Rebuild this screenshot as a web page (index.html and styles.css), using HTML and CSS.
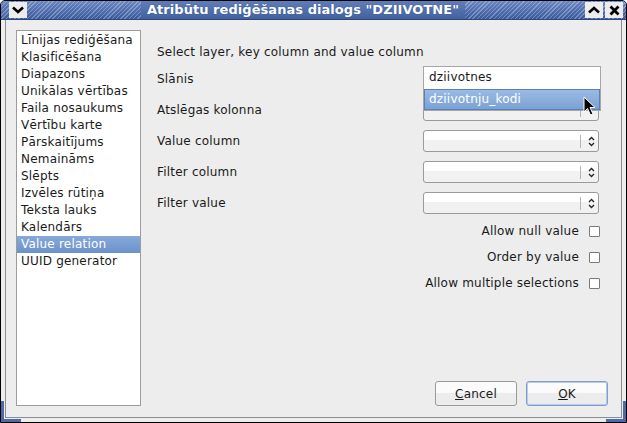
FILE: index.html
```html
<!DOCTYPE html>
<html lang="lv">
<head>
  <meta charset="UTF-8" />
  <title>Atribūtu rediģēšanas dialogs</title>
  <link rel="stylesheet" href="styles.css">
</head>
<body>
  <div class="window">
    <!-- Title bar -->
    <div class="titlebar">
      <span class="tb-btn menu">
        <svg width="12" height="8" viewBox="0 0 12 8"><path d="M1 1.5 L6 6 L11 1.5" fill="none" stroke="#000" stroke-width="2.6"/></svg>
      </span>
      <div class="title"><span>Atribūtu rediģēšanas dialogs "DZIIVOTNE"</span></div>
      <span class="tb-btn">
        <svg width="12" height="8" viewBox="0 0 12 8"><path d="M1 6.5 L6 2 L11 6.5" fill="none" stroke="#000" stroke-width="2.6"/></svg>
      </span>
      <span class="tb-btn">
        <svg width="11" height="11" viewBox="0 0 11 11"><path d="M1.5 1.5 L9.5 9.5 M9.5 1.5 L1.5 9.5" fill="none" stroke="#000" stroke-width="2.8"/></svg>
      </span>
    </div>

    <div class="frame">
      <div class="client">
        <!-- Widget types -->
        <ul class="types">
          <li>Līnijas rediģēšana</li>
          <li>Klasificēšana</li>
          <li>Diapazons</li>
          <li>Unikālas vērtības</li>
          <li>Faila nosaukums</li>
          <li>Vērtību karte</li>
          <li>Pārskaitījums</li>
          <li>Nemaināms</li>
          <li>Slēpts</li>
          <li>Izvēles rūtiņa</li>
          <li>Teksta lauks</li>
          <li>Kalendārs</li>
          <li class="selected">Value relation</li>
          <li>UUID generator</li>
        </ul>

        <div class="panel">
          <p class="intro">Select layer, key column and value column</p>

          <div class="form">
            <label>Slānis</label>
            <div class="field">
              <div class="combo"><span class="sep"></span><span class="arrows"></span></div>
              <div class="popup">
                <div class="opt">dziivotnes</div>
                <div class="opt hover">dziivotnju_kodi</div>
              </div>
              <svg class="cursor" width="13" height="21" viewBox="0 0 13 21">
                <path d="M1 1 L1 16 L4.5 12.5 L7.5 19 L10 18 L7 11.5 L12 11.5 Z" fill="#000" stroke="#fff" stroke-width="1"/>
              </svg>
            </div>

            <label>Atslēgas kolonna</label>
            <div class="field"><div class="combo"><span class="sep"></span></div></div>

            <label>Value column</label>
            <div class="field"><div class="combo"><span class="sep"></span><span class="arrows"></span></div></div>

            <label>Filter column</label>
            <div class="field"><div class="combo"><span class="sep"></span><span class="arrows"></span></div></div>

            <label>Filter value</label>
            <div class="field"><div class="combo"><span class="sep"></span><span class="arrows"></span></div></div>
          </div>

          <div class="checks">
            <div class="check">Allow null value <span class="box"></span></div>
            <div class="check">Order by value <span class="box"></span></div>
            <div class="check">Allow multiple selections <span class="box"></span></div>
          </div>

          <div class="buttons">
            <button class="btn"><u>C</u>ancel</button>
            <button class="btn default"><u>O</u>K</button>
          </div>
        </div>
      </div>
      <span class="grip left"></span>
      <span class="grip right"></span>
    </div>
  </div>
</body>
</html>
```

FILE: styles.css
```css
body {
  margin: 0;
  font-family: "DejaVu Sans", sans-serif;
  font-size: 12px;
  letter-spacing: 0.2px;
  color: #1a1a1a;
  background: #fff;
}

.window {
  width: 627px;
  height: 423px;
  box-sizing: border-box;
  border: 1px solid #000;
  border-radius: 5px 5px 0 0;
  background: #ededed;
  display: flex;
  flex-direction: column;
  overflow: hidden;
}

/* title bar */
.titlebar {
  height: 19px;
  flex: none;
  display: flex;
  align-items: center;
  padding: 0 3px 0 8px;
  gap: 2px;
  background:
    repeating-linear-gradient(-45deg, rgba(255,255,255,0.28) 0 1px, transparent 1px 3px),
    linear-gradient(#6886c3, #3a5a9c);
  border-bottom: 1px solid #2c467c;
  box-sizing: border-box;
}

.tb-btn {
  width: 18px;
  height: 16px;
  background: #ececec;
  display: flex;
  align-items: center;
  justify-content: center;
  flex: none;
}

.title {
  flex: 1;
  text-align: center;
  padding-right: 6px;
}

.title span {
  display: inline-block;
  padding: 0 6px;
  line-height: 18px;
  font-weight: bold;
  font-size: 13px;
  letter-spacing: 0.05px;
  color: #fff;
  background: linear-gradient(#5f7dba, #42629d);
  text-shadow: 0 0 1px #2c467c;
}

.frame {
  flex: 1;
  padding: 0 4px 4px 4px;
  display: flex;
  position: relative;
}

.client {
  flex: 1;
  display: flex;
  padding: 10px 13px 11px 10px;
  border: 1px solid #8e8e8e;
  border-top: none;
  background: #ededed;
}

/* list of widget types */
.types {
  list-style: none;
  margin: 0;
  padding: 1px 0 0;
  width: 123px;
  background: #fff;
  border: 1px solid #9c9c9c;
  flex: none;
}

.types li {
  height: 17px;
  line-height: 17px;
  padding-left: 4px;
  white-space: nowrap;
}

.types li.selected {
  background: linear-gradient(#86a9da, #6c92ca);
  color: #fff;
}

.panel {
  flex: 1;
  margin-left: 16px;
  display: flex;
  flex-direction: column;
}

.intro {
  margin: 14px 0 0;
  line-height: 17px;
}

.form {
  margin-top: 7px;
  margin-right: 9px;
  display: grid;
  grid-template-columns: 1fr 176px;
  grid-auto-rows: 22px;
  row-gap: 9px;
  align-items: center;
}

.field {
  position: relative;
  height: 22px;
}

.combo {
  height: 22px;
  box-sizing: border-box;
  border: 1px solid #9a9a9a;
  border-radius: 3px;
  background: linear-gradient(#fff 0 45%, #f1f1f1 45%);
  position: relative;
}

.combo .sep {
  position: absolute;
  left: 156px;
  top: 4px;
  height: 13px;
  border-left: 1px solid #b4b4b4;
}

.combo .arrows {
  position: absolute;
  left: 164px;
  top: 5px;
  width: 7px;
  height: 11px;
  background:
    url("data:image/svg+xml;utf8,<svg xmlns='http://www.w3.org/2000/svg' width='7' height='11'><path d='M1 4 L3.5 1.5 L6 4 M1 7 L3.5 9.5 L6 7' fill='none' stroke='%23222' stroke-width='1.3'/></svg>") no-repeat;
}

/* open dropdown of the layer combo */
.popup {
  position: absolute;
  left: 0;
  top: -2px;
  width: 178px;
  box-sizing: border-box;
  border: 1px solid #a6a6a6;
  background: #fff;
  z-index: 2;
}

.opt {
  height: 22px;
  line-height: 21px;
  padding-left: 5px;
}

.opt.hover {
  height: 21px;
  box-sizing: border-box;
  background: linear-gradient(#9bbbe4, #7ba1d4);
  border: 1px solid #5b80b9;
  padding-left: 4px;
  line-height: 19px;
  color: #fff;
}

.cursor {
  position: absolute;
  left: 160px;
  top: 28px;
  z-index: 3;
}

.checks {
  margin-top: 4px;
  margin-right: 8px;
  display: flex;
  flex-direction: column;
  align-items: flex-end;
}

.check {
  height: 26px;
  display: flex;
  align-items: center;
  gap: 10px;
}

.box {
  width: 11px;
  height: 11px;
  box-sizing: border-box;
  border: 1px solid #7a7a7a;
  border-radius: 1px;
  background: #fff;
}

.buttons {
  margin-top: auto;
  display: flex;
  justify-content: flex-end;
  gap: 9px;
}

.btn {
  width: 82px;
  height: 25px;
  font-family: inherit;
  font-size: 12px;
  letter-spacing: 0.2px;
  color: #1a1a1a;
  border: 1px solid #9a9a9a;
  border-radius: 3px;
  background: linear-gradient(#fbfbfb 0 50%, #ececec 50%);
  padding: 0;
}

.btn.default {
  border-color: #7f9dd0;
  box-shadow: inset 0 0 0 1px #b8cae8;
}

/* resize grips in the bottom corners */
.grip {
  position: absolute;
  bottom: -1px;
  width: 17px;
  height: 18px;
  border-bottom: 4px solid #4d6aa8;
}

.grip.left {
  left: -1px;
  border-left: 4px solid #4d6aa8;
}

.grip.right {
  right: -1px;
  border-right: 4px solid #4d6aa8;
}
```
